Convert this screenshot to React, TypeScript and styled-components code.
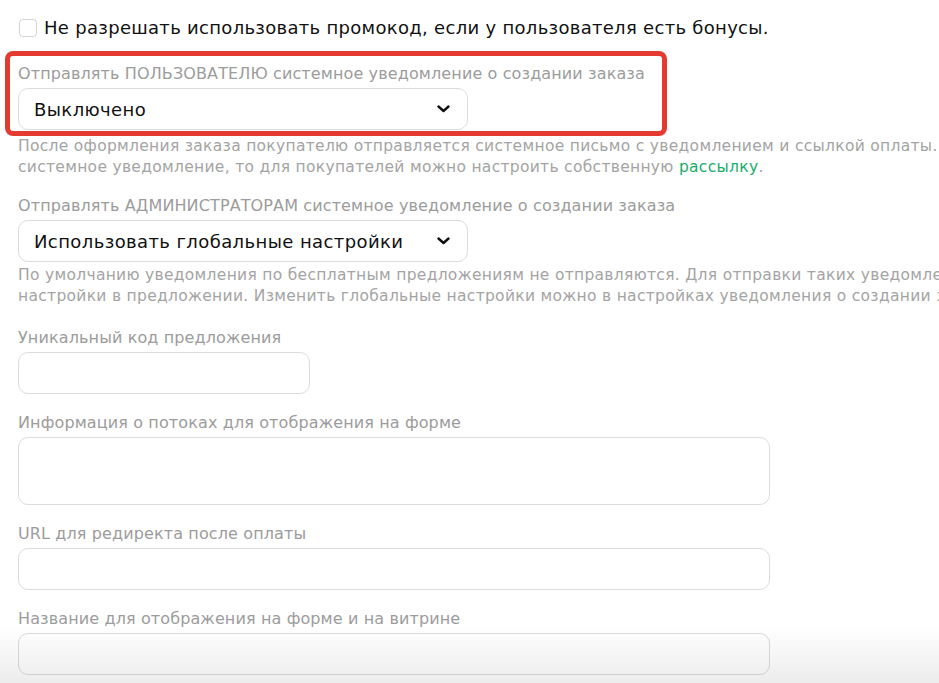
import React from "react";
import styled, { createGlobalStyle } from "styled-components";

const Global = createGlobalStyle`
  html, body {
    margin: 0;
    padding: 0;
    background: #ffffff;
    overflow: hidden;
  }
  body {
    font-family: "DejaVu Sans", "Open Sans", sans-serif;
    color: #111111;
  }
`;

const Page = styled.div`
  display: flex;
  flex-direction: column;
  align-items: flex-start;
  padding: 16px 0 0 18px;
  width: 1400px;
`;

const CheckRow = styled.label`
  display: flex;
  align-items: center;
  gap: 7px;
  padding-left: 1px;
  height: 24px;
  font-size: 18px;
  line-height: 24px;
  letter-spacing: 0.3px;
  color: #111111;
  white-space: nowrap;
`;

const CheckBox = styled.span`
  display: inline-block;
  width: 18px;
  height: 18px;
  box-sizing: border-box;
  border: 1px solid #d4d4d4;
  border-radius: 4px;
  background: #fff;
  flex: none;
`;

const Highlight = styled.div`
  position: relative;
  display: flex;
  flex-direction: column;
  margin-top: 23px;
  padding-bottom: 3px;

  &::after {
    content: "";
    position: absolute;
    top: -12px;
    left: -13px;
    width: 662px;
    bottom: -3px;
    box-sizing: border-box;
    border: 5px solid #e43b30;
    border-radius: 8px;
    pointer-events: none;
  }
`;

const Field = styled.div<{ $mt: number }>`
  display: flex;
  flex-direction: column;
  margin-top: ${(p) => p.$mt}px;
`;

const Label = styled.div`
  font-size: 16px;
  line-height: 22px;
  letter-spacing: 0.12px;
  color: #9c9c9c;
  margin-bottom: 3px;
  white-space: nowrap;
`;

const SelectBox = styled.div`
  display: flex;
  align-items: center;
  justify-content: space-between;
  box-sizing: border-box;
  width: 450px;
  height: 42px;
  padding: 0 17px 0 15px;
  border: 1px solid #dcdcdc;
  border-radius: 10px;
  background: #fff;
  font-size: 18px;
  letter-spacing: 0.4px;
  color: #111111;
  white-space: nowrap;
`;

const Input = styled.div<{ $w: number; $h?: number }>`
  box-sizing: border-box;
  width: ${(p) => p.$w}px;
  height: ${(p) => p.$h ?? 42}px;
  border: 1px solid #dcdcdc;
  border-radius: 10px;
  background: transparent;
`;

const Help = styled.div`
  margin-top: 3px;
  font-size: 15.5px;
  line-height: 21px;
  letter-spacing: 0.3px;
  color: #a4a4a4;
  white-space: nowrap;
`;

const Link = styled.a`
  color: #17ad68;
  text-decoration: none;
`;

const Fade = styled.div`
  position: fixed;
  left: 0;
  right: 0;
  bottom: 0;
  height: 56px;
  background: linear-gradient(to bottom, rgba(0, 0, 0, 0), rgba(0, 0, 0, 0.075));
  pointer-events: none;
`;

const Chevron = () => (
  <svg width="13" height="8" viewBox="0 0 13 8" fill="none">
    <polyline
      points="1.5,1.5 6.5,6 11.5,1.5"
      stroke="#111"
      strokeWidth="2.4"
      strokeLinecap="round"
      strokeLinejoin="round"
    />
  </svg>
);

export default function App() {
  return (
    <>
      <Global />
      <Page>
        <CheckRow>
          <CheckBox />
          Не разрешать использовать промокод, если у пользователя есть бонусы.
        </CheckRow>

        <Highlight>
          <Label>Отправлять ПОЛЬЗОВАТЕЛЮ системное уведомление о создании заказа</Label>
          <SelectBox>
            <span>Выключено</span>
            <Chevron />
          </SelectBox>
        </Highlight>
        <Help>
          <div>
            После оформления заказа покупателю отправляется системное письмо с уведомлением и ссылкой оплаты. Если отключить
          </div>
          <div>
            системное уведомление, то для покупателей можно настроить собственную <Link href="#">рассылку</Link>.
          </div>
        </Help>

        <Field $mt={17}>
          <Label>Отправлять АДМИНИСТРАТОРАМ системное уведомление о создании заказа</Label>
          <SelectBox>
            <span>Использовать глобальные настройки</span>
            <Chevron />
          </SelectBox>
          <Help>
            <div>
              По умолчанию уведомления по бесплатным предложениям не отправляются. Для отправки таких уведомлений измените
            </div>
            <div>
              настройки в предложении. Изменить глобальные настройки можно в настройках уведомления о создании заказа.
            </div>
          </Help>
        </Field>

        <Field $mt={20}>
          <Label>Уникальный код предложения</Label>
          <Input $w={292} />
        </Field>

        <Field $mt={18}>
          <Label>Информация о потоках для отображения на форме</Label>
          <Input $w={752} $h={68} />
        </Field>

        <Field $mt={18}>
          <Label>URL для редиректа после оплаты</Label>
          <Input $w={752} />
        </Field>

        <Field $mt={18}>
          <Label>Название для отображения на форме и на витрине</Label>
          <Input $w={752} />
        </Field>
      </Page>
      <Fade />
    </>
  );
}
